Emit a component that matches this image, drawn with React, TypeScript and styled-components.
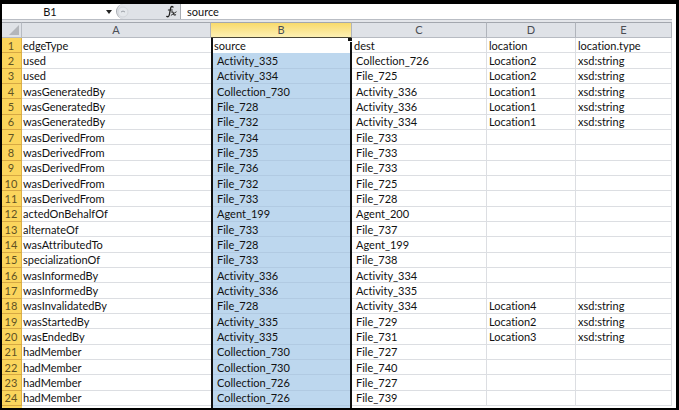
import React from "react";
import styled, { createGlobalStyle, css } from "styled-components";

const GlobalStyle = createGlobalStyle`
  * { box-sizing: border-box; }
  body { margin: 0; background: #000; }
`;

const Window = styled.main`
  display: flex;
  flex-direction: column;
  height: 100vh;
  border: 2px solid #000;
  border-top-width: 4px;
  border-right-width: 3px;
  background: #fff;
  color: #111;
  font-family: Lato, "Open Sans", sans-serif;
  font-size: 11px;
  line-height: 13px;
  font-variant-ligatures: none;
`;

const FormulaBar = styled.header`
  display: flex;
  flex: none;
  height: 15px;
  background: #fff;
`;

const NameBox = styled.div`
  display: flex;
  align-items: center;
  flex: none;
  width: 114px;
`;

const NameInput = styled.input`
  flex: 1;
  min-width: 0;
  height: 15px;
  margin: 0;
  padding: 0 4px 0 0;
  border: 0;
  outline: 0;
  background: transparent;
  color: inherit;
  font: inherit;
  text-align: center;
`;

const IconButton = styled.button`
  display: flex;
  align-items: center;
  justify-content: center;
  height: 15px;
  margin: 0;
  padding: 0;
  border: 0;
  background: transparent;
  color: #222;
`;

const MenuButton = styled(IconButton)`
  width: 14px;
`;

const FunctionArea = styled.div`
  display: flex;
  flex: none;
  align-items: center;
  justify-content: space-between;
  width: 65px;
  padding-right: 3px;
  border-left: 1px solid #a9adb3;
  border-right: 1px solid #a9adb3;
  border-radius: 8px 0 0 8px;
  background: #dfe2e7;
`;

const FormulaInput = styled.input`
  flex: 1;
  min-width: 0;
  height: 15px;
  margin: 0;
  padding: 0 0 0 6px;
  border: 0;
  outline: 0;
  background: #fff;
  color: inherit;
  font: inherit;
`;

const SheetArea = styled.section`
  display: flex;
  flex: 1;
  min-height: 0;
  margin-right: 4px;
  border-top: 1px solid #b9bdc4;
  background: linear-gradient(#e4e6ea 0 2px, #fff 2px);
  padding-top: 2px;
`;

const Sheet = styled.table`
  width: 100%;
  height: 100%;
  table-layout: fixed;
  border-collapse: separate;
  border-spacing: 0;
`;

const Column = styled.col<{ $width?: number }>`
  ${(p) => p.$width && css`width: ${p.$width}px;`}
`;

const HeaderRow = styled.tr`
  height: 16px;
`;

const ColumnHeading = styled.th<{ $selected?: boolean }>`
  height: 16px;
  padding: 0;
  border-top: 1px solid #a3a7ae;
  border-right: 1px solid #b0b4bb;
  border-bottom: 1px solid ${(p) => (p.$selected ? "#4a4636" : "#b7bbc2")};
  background: ${(p) => (p.$selected ? "linear-gradient(#f8da6c, #fdf0b4)" : "#dfe2e7")};
  color: #4a4e55;
  font-weight: 400;
  line-height: 14px;
`;

const Corner = styled.td`
  padding: 0 2px 0 0;
  border-top: 1px solid #a3a7ae;
  border-right: 1px solid #b7bbc2;
  border-bottom: 1px solid #b7bbc2;
  background: #dfe2e7;

  svg { display: block; margin-left: auto; }
`;

const RowHeading = styled.th`
  padding: 0 1px 0 0;
  border-right: 1px solid #dcb04a;
  border-bottom: 1px solid #d6a843;
  background: #fbd55c;
  color: #5f5223;
  font-weight: 400;
  text-align: center;
`;

const Cell = styled.td<{ $indent?: boolean }>`
  padding: 0 0 0 ${(p) => (p.$indent ? 4 : 2)}px;
  border-right: 1px solid #dcdee2;
  border-bottom: 1px solid #dcdee2;
  white-space: nowrap;
`;

const FirstCell = styled(Cell)`
  padding-left: 1px;
  border-right: 0;
`;

const SelectedCell = styled(Cell)`
  position: relative;
  padding-left: ${(p) => (p.$indent ? 4 : 1)}px;
  padding-bottom: 1px;
  border: solid #111;
  border-width: 0 2px;
  background: ${(p) =>
    p.$indent ? "linear-gradient(to top, #b1cae2 1px, #bdd7ee 1px)" : "#fff"};
`;

const FillHandle = styled.span`
  position: absolute;
  top: 0;
  right: -3px;
  width: 4px;
  height: 3px;
  border: 1px solid #fff;
  border-top: 0;
  background: #111;
  box-sizing: content-box;
`;

const PartialRow = styled.tr`
  height: 2px;

  td { height: 2px; padding: 0; }
  td:nth-child(1) { background: #fbd55c; }
  td:nth-child(3) { border: solid #111; border-width: 0 2px; background: #bdd7ee; }
`;

const rows: string[][] = [
  ["edgeType", "source", "dest", "location", "location.type"],
  ["used", "Activity_335", "Collection_726", "Location2", "xsd:string"],
  ["used", "Activity_334", "File_725", "Location2", "xsd:string"],
  ["wasGeneratedBy", "Collection_730", "Activity_336", "Location1", "xsd:string"],
  ["wasGeneratedBy", "File_728", "Activity_336", "Location1", "xsd:string"],
  ["wasGeneratedBy", "File_732", "Activity_334", "Location1", "xsd:string"],
  ["wasDerivedFrom", "File_734", "File_733", "", ""],
  ["wasDerivedFrom", "File_735", "File_733", "", ""],
  ["wasDerivedFrom", "File_736", "File_733", "", ""],
  ["wasDerivedFrom", "File_732", "File_725", "", ""],
  ["wasDerivedFrom", "File_733", "File_728", "", ""],
  ["actedOnBehalfOf", "Agent_199", "Agent_200", "", ""],
  ["alternateOf", "File_733", "File_737", "", ""],
  ["wasAttributedTo", "File_728", "Agent_199", "", ""],
  ["specializationOf", "File_733", "File_738", "", ""],
  ["wasInformedBy", "Activity_336", "Activity_334", "", ""],
  ["wasInformedBy", "Activity_336", "Activity_335", "", ""],
  ["wasInvalidatedBy", "File_728", "Activity_334", "Location4", "xsd:string"],
  ["wasStartedBy", "Activity_335", "File_729", "Location2", "xsd:string"],
  ["wasEndedBy", "Activity_335", "File_731", "Location3", "xsd:string"],
  ["hadMember", "Collection_730", "File_727", "", ""],
  ["hadMember", "Collection_730", "File_740", "", ""],
  ["hadMember", "Collection_726", "File_727", "", ""],
  ["hadMember", "Collection_726", "File_739", "", ""],
];

const letters = ["A", "B", "C", "D", "E"];

export default function App() {
  return (
    <>
      <GlobalStyle />
      <Window>
        <FormulaBar>
          <NameBox>
            <NameInput aria-label="Name box" defaultValue="B1" />
            <MenuButton type="button" aria-label="Named cells">
              <svg width="6" height="4" viewBox="0 0 6 4">
                <path d="M0 0h6L3 4z" fill="currentColor" />
              </svg>
            </MenuButton>
          </NameBox>
          <FunctionArea>
            <svg width="12" height="12" viewBox="0 0 12 12" fill="none" aria-hidden="true">
              <circle cx="6" cy="6" r="5" fill="#e4e7eb" stroke="#d3d6db" />
              <path d="M4 6q2-2 4 0" stroke="#9b9fa6" />
            </svg>
            <IconButton type="button" aria-label="Insert function">
              <svg width="11" height="13" viewBox="0 0 11 13" fill="none" stroke="currentColor" strokeLinecap="round">
                <path d="M7 2C5.600 .8 4.800 2 4.400 4.200L3.400 9.500C3 11.600 2 12.200 .8 11.400" strokeWidth="1.300" />
                <path d="M2.300 5h4" />
                <path d="M5.600 7c1.400-.6 1.600.6 2 1.800s.8 1.600 2 1" strokeWidth="1.100" />
                <path d="M10.200 6.900L5.200 10.200" strokeWidth=".9" />
              </svg>
            </IconButton>
          </FunctionArea>
          <FormulaInput aria-label="Formula" defaultValue="source" />
        </FormulaBar>
        <SheetArea>
          <Sheet>
            <colgroup>
              <Column $width={20} />
              <Column />
              <Column $width={141} />
              <Column $width={135} />
              <Column $width={89} />
              <Column $width={96} />
            </colgroup>
            <thead>
              <HeaderRow>
                <Corner>
                  <svg width="10" height="10" viewBox="0 0 10 10" aria-hidden="true">
                    <path d="M10 0v10H0z" fill="#b3b6bb" />
                  </svg>
                </Corner>
                {letters.map((letter) => (
                  <ColumnHeading key={letter} scope="col" $selected={letter === "B"}>
                    {letter}
                  </ColumnHeading>
                ))}
              </HeaderRow>
            </thead>
            <tbody>
              {rows.map(([edge, source, dest, location, type], r) => (
                <tr key={r}>
                  <RowHeading scope="row">{r + 1}</RowHeading>
                  <FirstCell>{edge}</FirstCell>
                  <SelectedCell $indent={r > 0}>
                    {source}
                    {r === 0 && <FillHandle />}
                  </SelectedCell>
                  <Cell $indent={r > 0}>{dest}</Cell>
                  <Cell>{location}</Cell>
                  <Cell>{type}</Cell>
                </tr>
              ))}
            </tbody>
            <tfoot>
              <PartialRow aria-hidden="true">
                <td />
                <td />
                <td />
                <td colSpan={3} />
              </PartialRow>
            </tfoot>
          </Sheet>
        </SheetArea>
      </Window>
    </>
  );
}
